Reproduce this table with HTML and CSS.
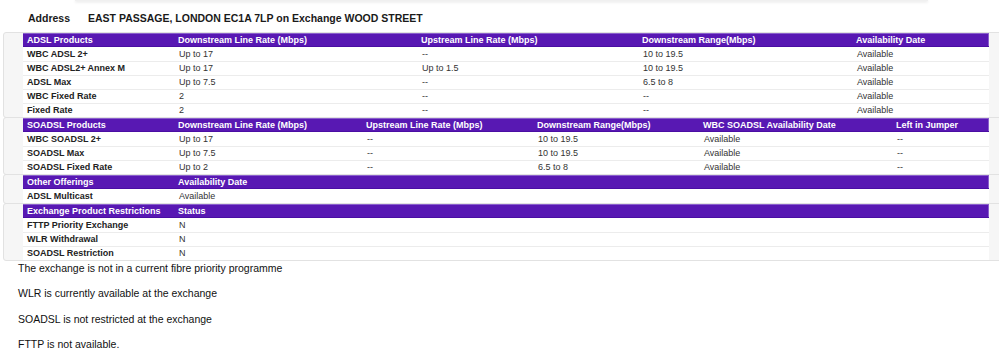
FILE: index.html
```html
<!DOCTYPE html>
<html>
<head>
<meta charset="utf-8">
<link rel="stylesheet" href="styles.css">
</head>
<body>
<div class="topcard"></div>
<div class="address">
  <span class="addr-label">Address</span>
  <span class="addr-value">EAST PASSAGE, LONDON EC1A 7LP on Exchange WOOD STREET</span>
</div>

<div class="box">
<table class="grid t1">
  <colgroup><col class="c1"><col class="c2"><col class="c3"><col class="c4"><col class="c5"></colgroup>
  <tr class="head"><th>ADSL Products</th><th>Downstream Line Rate (Mbps)</th><th>Upstream Line Rate (Mbps)</th><th>Downstream Range(Mbps)</th><th>Availability Date</th></tr>
  <tr><td class="name">WBC ADSL 2+</td><td>Up to 17</td><td>--</td><td>10 to 19.5</td><td>Available</td></tr>
  <tr><td class="name">WBC ADSL2+ Annex M</td><td>Up to 17</td><td>Up to 1.5</td><td>10 to 19.5</td><td>Available</td></tr>
  <tr><td class="name">ADSL Max</td><td>Up to 7.5</td><td>--</td><td>6.5 to 8</td><td>Available</td></tr>
  <tr><td class="name">WBC Fixed Rate</td><td>2</td><td>--</td><td>--</td><td>Available</td></tr>
  <tr><td class="name">Fixed Rate</td><td>2</td><td>--</td><td>--</td><td>Available</td></tr>
</table>
</div>

<div class="box">
<table class="grid t2">
  <colgroup><col class="c1"><col class="d2"><col class="d3"><col class="d4"><col class="d5"><col class="d6"></colgroup>
  <tr class="head"><th>SOADSL Products</th><th>Downstream Line Rate (Mbps)</th><th>Upstream Line Rate (Mbps)</th><th>Downstream Range(Mbps)</th><th>WBC SOADSL Availability Date</th><th>Left in Jumper</th></tr>
  <tr><td class="name">WBC SOADSL 2+</td><td>Up to 17</td><td>--</td><td>10 to 19.5</td><td>Available</td><td>--</td></tr>
  <tr><td class="name">SOADSL Max</td><td>Up to 7.5</td><td>--</td><td>10 to 19.5</td><td>Available</td><td>--</td></tr>
  <tr><td class="name">SOADSL Fixed Rate</td><td>Up to 2</td><td>--</td><td>6.5 to 8</td><td>Available</td><td>--</td></tr>
</table>
</div>

<div class="box">
<table class="grid t3">
  <colgroup><col class="c1"><col></colgroup>
  <tr class="head"><th>Other Offerings</th><th>Availability Date</th></tr>
  <tr><td class="name">ADSL Multicast</td><td>Available</td></tr>
</table>
</div>

<div class="box">
<table class="grid t4">
  <colgroup><col class="c1"><col></colgroup>
  <tr class="head"><th>Exchange Product Restrictions</th><th>Status</th></tr>
  <tr><td class="name">FTTP Priority Exchange</td><td>N</td></tr>
  <tr><td class="name">WLR Withdrawal</td><td>N</td></tr>
  <tr><td class="name">SOADSL Restriction</td><td>N</td></tr>
</table>
</div>

<div class="notes">
  <p>The exchange is not in a current fibre priority programme</p>
  <p>WLR is currently available at the exchange</p>
  <p>SOADSL is not restricted at the exchange</p>
  <p>FTTP is not available.</p>
</div>
</body>
</html>
```

FILE: styles.css
```css
html, body {
  margin: 0;
  padding: 0;
  background: #ffffff;
  font-family: "Liberation Sans", Arial, sans-serif;
  color: #222;
  overflow: hidden;
}

.topcard {
  margin: 0 71px 0 75px;
  height: 1px;
  background: #f0f0f0;
  box-shadow: 0 1px 3px rgba(0, 0, 0, 0.18);
}

.address {
  display: flex;
  padding: 11px 0 0 28px;
  height: 20px;
  font-size: 10.5px;
  font-weight: bold;
  color: #1a1a1a;
  line-height: 13px;
}

.addr-label {
  width: 60px;
}

.box {
  margin-left: 3px;
  margin-right: -10px;
  padding-left: 19px;
  background: #f6f6f6;
  border: 1px solid #e2e2e2;
  border-radius: 3px;
}

.box + .box {
  margin-top: -1px;
}

.grid {
  width: 966px;
  table-layout: fixed;
  border-collapse: separate;
  border-spacing: 0;
  background: #fff;
  font-size: 9px;
}

.grid th,
.grid td {
  padding: 0 4px;
  text-align: left;
  white-space: nowrap;
  overflow: hidden;
}

.grid td {
  border-top: 1px solid #ececec;
  color: #333;
  line-height: 13px;
}

.grid tr:nth-child(2) td {
  border-top: none;
  line-height: 14px;
}

.head th {
  background: #5818b3;
  color: #fff;
  font-weight: bold;
  line-height: 14px;
  box-shadow: inset 0 1px 0 #8a5fcc, inset 0 -1px 0 #4a0ea3;
}

.head th:last-child {
  box-shadow: inset 0 1px 0 #8a5fcc, inset 0 -1px 0 #4a0ea3, inset -1px 0 0 #8a5fcc;
}

.grid td.name {
  font-weight: bold;
  color: #222;
}

.t1 .c1, .t2 .c1, .t3 .c1, .t4 .c1 { width: 151px; }
.t1 .c2 { width: 243px; }
.t1 .c3 { width: 221px; }
.t1 .c4 { width: 214px; }

.t2 .d2 { width: 188px; }
.t2 .d3 { width: 171px; }
.t2 .d4 { width: 166px; }
.t2 .d5 { width: 193px; }

.grid td:not(.name) {
  padding-left: 5px;
}

.notes {
  padding-top: 1px;
  padding-left: 18px;
  font-size: 10.5px;
  color: #111;
}

.notes p {
  margin: 0 0 13.3px 0;
  line-height: 12px;
}
```
